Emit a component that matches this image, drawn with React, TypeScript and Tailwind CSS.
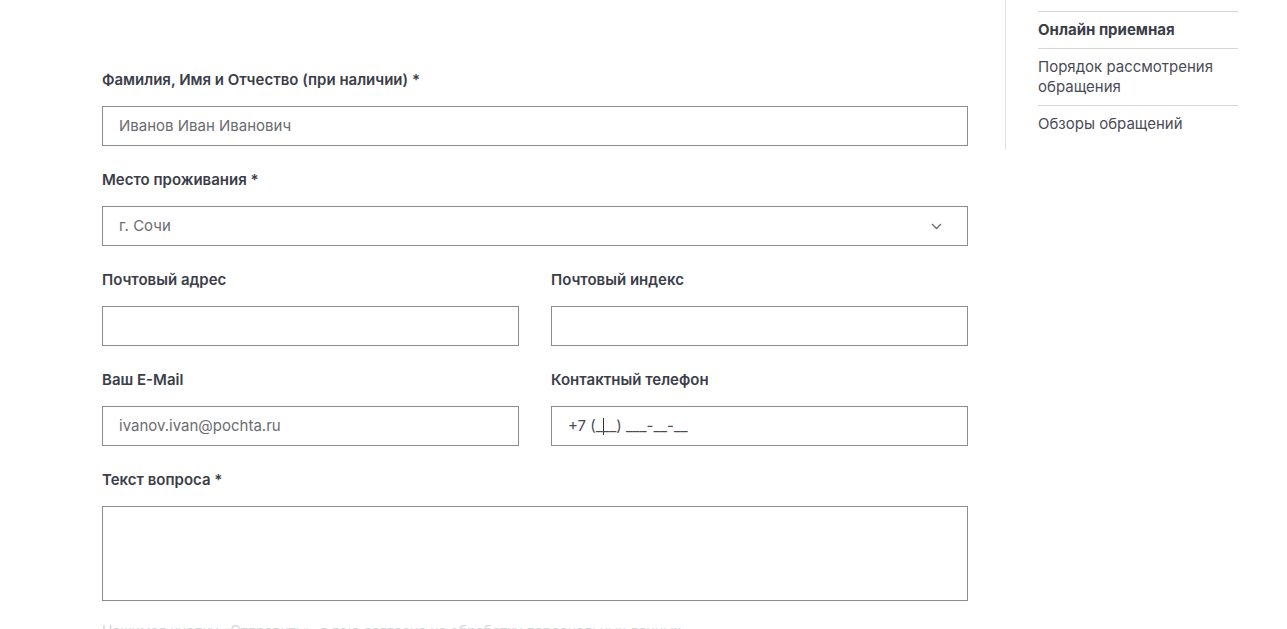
import React from "react";

const font = { fontFamily: "Inter, 'Noto Sans', sans-serif" };

function Label({ children }: { children: React.ReactNode }) {
  return (
    <div className="text-[15px] leading-[20px] font-semibold text-[#3b3e48] mb-4">{children}</div>
  );
}

function Input({ value, placeholder }: { value?: string; placeholder?: string }) {
  return (
    <div className="h-10 border border-[#8c8c8c] flex items-center px-4 pt-px text-[15px] text-[#6b6c70]">
      {value ?? placeholder ?? ""}
    </div>
  );
}

export default function App() {
  return (
    <div className="w-[1287px] h-[629px] overflow-hidden bg-white flex" style={font}>
      <main className="w-[866px] ml-[102px] pt-[70px] flex flex-col gap-6">
        <div>
          <Label>Фамилия, Имя и Отчество (при наличии) *</Label>
          <Input placeholder="Иванов Иван Иванович" />
        </div>
        <div>
          <Label>Место проживания *</Label>
          <div className="h-10 border border-[#8c8c8c] flex items-center justify-between pl-4 pr-[25px] pt-px text-[15px] text-[#6b6c70]">
            <span>г. Сочи</span>
            <svg width="11" height="7" viewBox="0 0 11 7" fill="none">
              <path d="M1 1l4.5 4.5L10 1" stroke="#6b6c70" strokeWidth="1.3" />
            </svg>
          </div>
        </div>
        <div className="grid grid-cols-2 gap-x-8">
          <div>
            <Label>Почтовый адрес</Label>
            <Input />
          </div>
          <div>
            <Label>Почтовый индекс</Label>
            <Input />
          </div>
        </div>
        <div className="grid grid-cols-2 gap-x-8">
          <div>
            <Label>Ваш E-Mail</Label>
            <Input placeholder="ivanov.ivan@pochta.ru" />
          </div>
          <div>
            <Label>Контактный телефон</Label>
            <div className="h-10 border border-[#8c8c8c] flex items-center px-4 pt-px text-[15px] text-[#4a4c52]">
              <span>+7 (_</span>
              <span className="inline-block w-px h-[17px] bg-[#333] -mr-px"></span>
              <span>__) ___-__-__</span>
            </div>
          </div>
        </div>
        <div>
          <Label>Текст вопроса *</Label>
          <div className="h-[95px] border border-[#8c8c8c]"></div>
          <p className="mt-5 text-[14px] leading-[20px] text-[#d4d5d8]">
            Нажимая кнопку «Отправить», я даю согласие на обработку персональных данных
          </p>
        </div>
      </main>
      <aside className="ml-[37px] h-[150px] border-l border-[#e3e3e3] pl-8 pt-[11px]">
        <ul className="w-[200px] text-[15px] leading-[20px] text-[#4a4c55]">
          <li className="border-t border-[#d6d6d6] py-2 font-bold text-[#3b3e48]">Онлайн приемная</li>
          <li className="border-t border-[#d6d6d6] py-2">
            Порядок рассмотрения
            <br />
            обращения
          </li>
          <li className="border-t border-[#d6d6d6] py-2">Обзоры обращений</li>
        </ul>
      </aside>
    </div>
  );
}
